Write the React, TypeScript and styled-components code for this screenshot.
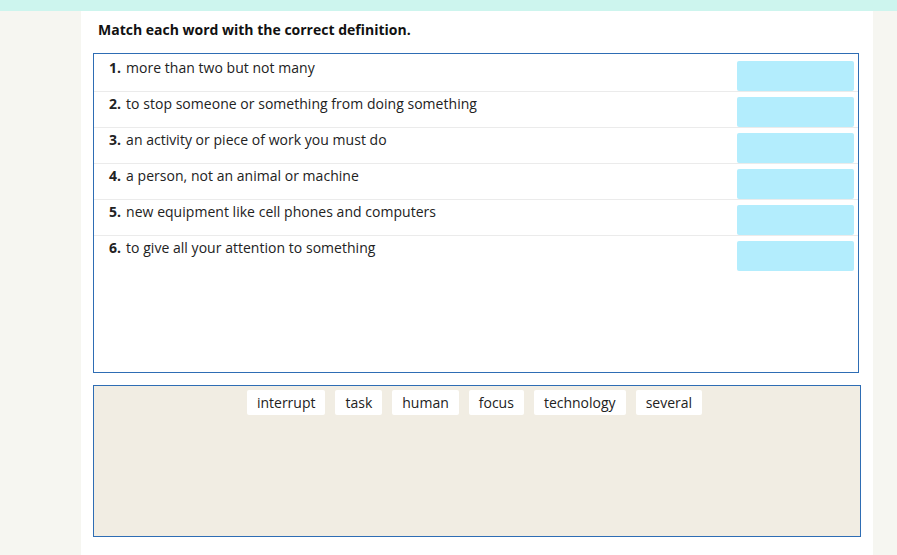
import styled, { createGlobalStyle } from "styled-components";

const GlobalStyle = createGlobalStyle`
  html, body {
    margin: 0;
    padding: 0;
    background: #f6f6f1;
  }
  body {
    font-family: "Open Sans", "Liberation Sans", sans-serif;
    color: #222222;
  }
`;

const TopBar = styled.div`
  height: 11px;
  background-color: #cdf5ee;
`;

const Page = styled.div`
  margin-left: 81px;
  width: 792px;
  min-height: 544px;
  background-color: #ffffff;
  padding: 9px 12px 0;
  box-sizing: border-box;
`;

const Heading = styled.h2`
  margin: 0 0 13px 5px;
  font-size: 14px;
  line-height: 20px;
  font-weight: 700;
  color: #111111;
`;

const DefinitionBox = styled.div`
  width: 766px;
  height: 320px;
  box-sizing: border-box;
  border: 1px solid #2e6db4;
  padding-top: 2px;
  margin-bottom: 12px;
`;

const DefinitionRow = styled.div`
  display: flex;
  align-items: flex-start;
  height: 36px;
  box-sizing: border-box;
  border-bottom: 1px solid #ebebeb;
  padding-left: 15px;

  &:last-child {
    border-bottom: none;
  }
`;

const DefinitionText = styled.div`
  padding-top: 2px;
  font-size: 14px;
  line-height: 20px;
  letter-spacing: 0.03px;
`;

const Number = styled.span`
  font-weight: 700;
  margin-right: 5px;
`;

const DropZone = styled.div`
  margin: 5px 4px 0 auto;
  width: 117px;
  height: 30px;
  border-radius: 2px;
  background-color: #b3edfd;
`;

const WordBank = styled.div`
  width: 768px;
  height: 152px;
  box-sizing: border-box;
  border: 1px solid #2e6db4;
  background-color: #f1ede3;
  padding: 4px 5px 0 0;
  display: flex;
  justify-content: center;
  align-items: flex-start;
  gap: 10px;
`;

const WordChip = styled.div`
  background-color: #ffffff;
  border-radius: 2px;
  padding: 3px 10px;
  font-size: 14px;
  line-height: 19px;
  color: #222222;
`;

const definitions = [
  "more than two but not many",
  "to stop someone or something from doing something",
  "an activity or piece of work you must do",
  "a person, not an animal or machine",
  "new equipment like cell phones and computers",
  "to give all your attention to something",
];

const words = ["interrupt", "task", "human", "focus", "technology", "several"];

export default function App() {
  return (
    <>
      <GlobalStyle />
      <TopBar />
      <Page>
        <Heading>Match each word with the correct definition.</Heading>
        <DefinitionBox>
          {definitions.map((text, i) => (
            <DefinitionRow key={text}>
              <DefinitionText>
                <Number>{i + 1}.</Number>
                {text}
              </DefinitionText>
              <DropZone />
            </DefinitionRow>
          ))}
        </DefinitionBox>
        <WordBank>
          {words.map((w) => (
            <WordChip key={w}>{w}</WordChip>
          ))}
        </WordBank>
      </Page>
    </>
  );
}
